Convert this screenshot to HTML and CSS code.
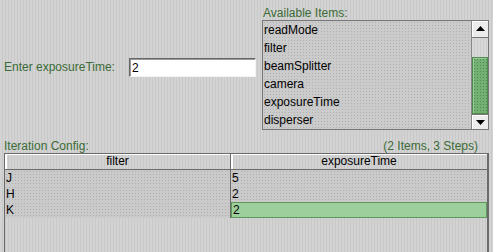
FILE: index.html
```html
<!DOCTYPE html>
<html lang="en">
<head>
    <meta charset="UTF-8">
    <title>Iteration Config</title>
    <link rel="stylesheet" href="styles.css">
</head>
<body>
    <div class="top">
        <div class="entry">
            <label class="caption entry-label" for="value">Enter exposureTime:</label>
            <input id="value" class="field" type="text" value="2">
        </div>
        <div class="avail">
            <div class="caption avail-label">Available Items:</div>
            <div class="list">
                <ul class="items">
                    <li>readMode</li>
                    <li>filter</li>
                    <li>beamSplitter</li>
                    <li>camera</li>
                    <li>exposureTime</li>
                    <li>disperser</li>
                </ul>
                <div class="vbar">
                    <div class="arrow up">
                        <svg width="9" height="5" viewBox="0 0 9 5"><polygon points="0,5 9,5 4.5,0" fill="#000"/></svg>
                    </div>
                    <div class="track"></div>
                    <div class="thumb"></div>
                    <div class="arrow down">
                        <svg width="9" height="5" viewBox="0 0 9 5"><polygon points="0,0 9,0 4.5,5" fill="#000"/></svg>
                    </div>
                </div>
            </div>
        </div>
    </div>

    <div class="config-head">
        <span class="caption">Iteration Config:</span>
        <span class="caption">(2 Items, 3 Steps)</span>
    </div>

    <div class="grid-pane">
        <div class="grid-row head">
            <div class="hcell">filter</div>
            <div class="hcell">exposureTime</div>
        </div>
        <div class="grid-row">
            <div class="cell">J</div>
            <div class="cell">5</div>
        </div>
        <div class="grid-row">
            <div class="cell">H</div>
            <div class="cell">2</div>
        </div>
        <div class="grid-row">
            <div class="cell">K</div>
            <div class="cell selected">2</div>
        </div>
    </div>
</body>
</html>
```

FILE: styles.css
```css
html, body {
    margin: 0;
    padding: 0;
}
body {
    width: 493px;
    height: 252px;
    overflow: hidden;
    font-family: "Liberation Sans", Arial, sans-serif;
    font-size: 12px;
    color: #000;
    background: repeating-linear-gradient(90deg, #d3d3d3 0 2px, #c8c8c8 2px 3px);
}
.caption {
    color: #3b6b36;
}

/* top area */
.top {
    display: flex;
    height: 132px;
}
.entry {
    display: flex;
    align-items: center;
    padding-left: 4px;
    padding-top: 2px;
}
.entry-label {
    width: 125px;
    line-height: 14px;
}
.field {
    box-sizing: border-box;
    width: 127px;
    height: 19px;
    margin: 0;
    padding: 1px 2px 0;
    font: 12px "Liberation Sans", Arial, sans-serif;
    color: #000;
    background: #fff;
    border: 1px solid;
    border-color: #666 #f4f4f4 #f4f4f4 #666;
    box-shadow: inset 1px 1px 0 #9a9a9a;
    outline: none;
}
.avail {
    margin-left: 6px;
    width: 227px;
    padding-top: 6px;
}
.avail-label {
    line-height: 14px;
    padding-left: 1px;
}
.list {
    display: flex;
    box-sizing: border-box;
    height: 110px;
    border: 1px solid #777;
}
.items {
    list-style: none;
    margin: 0;
    padding: 0;
    flex: 1;
    background-color: #cbcbcb;
    background-image: radial-gradient(circle, #b2b2b2 0.7px, transparent 1px);
    background-size: 3px 3px;
}
.items li {
    height: 18px;
    line-height: 18px;
    padding-left: 1px;
}
.vbar {
    width: 16px;
    display: flex;
    flex-direction: column;
    border-left: 1px solid #888;
}
.arrow {
    display: flex;
    align-items: center;
    justify-content: center;
    background: #ececec;
    box-shadow: inset 1px 1px 0 #fff;
}
.arrow.up {
    height: 16px;
    border-bottom: 1px solid #777;
}
.arrow.down {
    height: 14px;
    border-top: 1px solid #777;
}
.track {
    height: 19px;
    background: repeating-linear-gradient(90deg, #d8d8d8 0 2px, #cdcdcd 2px 3px);
}
.thumb {
    box-sizing: border-box;
    height: 58px;
    border: 1px solid #4f8a4f;
    background-color: #74b074;
    background-image: radial-gradient(circle, #4d8d4d 0.7px, transparent 1px);
    background-size: 3px 3px;
    box-shadow: inset 1px 1px 0 #9ccc9c;
}

/* iteration table */
.config-head {
    display: flex;
    justify-content: space-between;
    margin: 8px 15px 0 4px;
    line-height: 13px;
}
.grid-pane {
    box-sizing: border-box;
    margin: 0 4px;
    width: 485px;
    height: 99px;
    border: 1px solid #6a6a6a;
    border-bottom: none;
    border-right-width: 2px;
}
.grid-row {
    display: grid;
    grid-template-columns: 226px 1fr;
}
.hcell {
    height: 15px;
    line-height: 15px;
    text-align: center;
    border-right: 1px solid #6a6a6a;
    border-bottom: 1px solid #6a6a6a;
    box-shadow: inset 1px 1px 0 #fff, inset 2px 0 0 #fff;
}
.hcell:last-child {
    border-right: none;
}
.cell {
    height: 16px;
    line-height: 16px;
    padding-left: 1px;
    background-color: #cacaca;
    background-image: radial-gradient(circle, #b0b0b0 0.7px, transparent 1px);
    background-size: 3px 3px;
}
.cell:first-child {
    border-right: 1px solid #6a6a6a;
}
.cell.selected {
    background: #9ccf9c;
    box-shadow: inset 0 0 0 1px #5c9a5c;
    padding-left: 2px;
}
```
